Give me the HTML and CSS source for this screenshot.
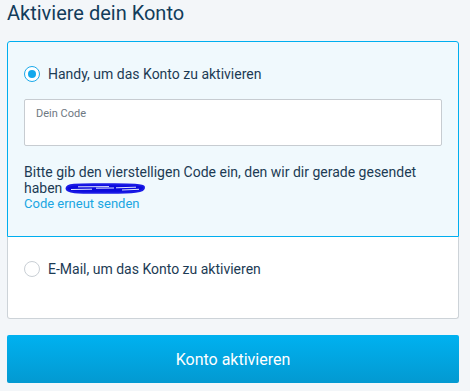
FILE: index.html
```html
<!DOCTYPE html>
<html lang="de">
<head>
<meta charset="utf-8">
<title>Aktiviere dein Konto</title>
<link rel="stylesheet" href="styles.css">
</head>
<body>
<div class="page">
  <h1 class="title">Aktiviere dein Konto</h1>
  <div class="card">
    <div class="option option-active">
      <label class="radio-row">
        <span class="radio radio-on"><span class="dot"></span></span>
        <span class="radio-label">Handy, um das Konto zu aktivieren</span>
      </label>
      <div class="input-box">
        <span class="input-label">Dein Code</span>
      </div>
      <p class="help">Bitte gib den vierstelligen Code ein, den wir dir gerade gesendet haben <svg class="scribble" width="82" height="11" viewBox="0 0 82 11"><path d="M2.5 5.5 C2.5 1.5 10 1 40 1.3 C62 1.5 79 1 80 4 C81 9 70 10 40 9.8 C15 9.7 2.5 10 2.5 5.5 Z" fill="#0b0bdc" stroke="#1a1ae6" stroke-width="2"/><path d="M7 6.5 L28 6.2 M32 5.2 L50 5 M52 4.8 L72 4.2 M14 3.8 L45 3.6 M58 7 L75 6.3" stroke="#dfe4ff" stroke-width="1" fill="none"/></svg></p>
      <a class="resend" href="#">Code erneut senden</a>
    </div>
    <div class="option option-inactive">
      <label class="radio-row">
        <span class="radio"></span>
        <span class="radio-label">E-Mail, um das Konto zu aktivieren</span>
      </label>
    </div>
  </div>
  <button class="submit" type="button">Konto aktivieren</button>
</div>
</body>
</html>
```
FILE: styles.css
```css
html, body {
  margin: 0;
  padding: 0;
  background: #f3f6f9;
}
body {
  font-family: Roboto, "Liberation Sans", sans-serif;
  color: #1c3b54;
}
.page {
  margin: 0 11px 0 7px;
  padding-top: 1px;
}
.title {
  margin: 0;
  font-size: 20px;
  font-weight: 400;
  line-height: 24px;
  color: #123c5b;
}
.card {
  margin-top: 16px;
  border-radius: 3px;
  background: #fff;
}
.option {
  padding: 24px 16px;
}
.option-active {
  border: 1px solid #00aeef;
  background: #f0f9fd;
  border-radius: 3px 3px 0 0;
}
.option-inactive {
  border: 1px solid #cdd3d8;
  border-top: none;
  border-radius: 0 0 3px 3px;
  padding-bottom: 41px;
}
.radio-row {
  display: flex;
  align-items: center;
  gap: 8px;
  height: 16px;
}
.radio {
  box-sizing: border-box;
  width: 16px;
  height: 16px;
  border-radius: 50%;
  border: 1px solid #c9cfd5;
  background: #fff;
  display: flex;
  align-items: center;
  justify-content: center;
  flex: none;
}
.radio-on {
  border: 1.5px solid #1aa9ea;
}
.dot {
  width: 8px;
  height: 8px;
  border-radius: 50%;
  background: #12a8ec;
}
.radio-label {
  font-size: 14px;
  line-height: 16px;
  color: #1c3b54;
}
.input-box {
  margin-top: 17px;
  height: 47px;
  box-sizing: border-box;
  border: 1px solid #c7ccd1;
  border-radius: 2px;
  background: #fff;
  padding: 8px 11px 0;
}
.input-label {
  display: block;
  font-size: 11px;
  line-height: 12px;
  color: #6e7882;
}
.help {
  margin: 18px 0 0;
  font-size: 14px;
  line-height: 16px;
  color: #1c3b54;
}
.scribble {
  vertical-align: -1px;
  margin-left: -2px;
}
.resend {
  display: block;
  font-size: 13px;
  line-height: 16px;
  color: #1aa6e2;
  text-decoration: none;
}
.submit {
  display: block;
  width: 100%;
  height: 48px;
  margin-top: 16px;
  border: none;
  border-radius: 2px;
  background: linear-gradient(#00b1f0, #0399d1);
  color: #fff;
  font-family: Roboto, "Liberation Sans", sans-serif;
  font-size: 16px;
  cursor: pointer;
}
```
